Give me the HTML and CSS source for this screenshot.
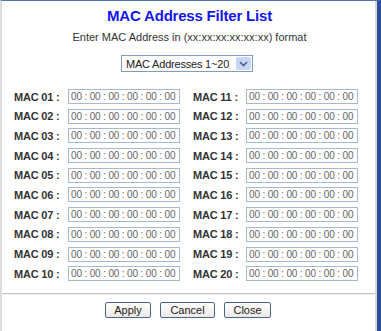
FILE: index.html
```html
<!DOCTYPE html>
<html lang="en">
<head>
  <meta charset="UTF-8" />
  <title>MAC Address Filter List</title>
  <link rel="stylesheet" href="styles.css">
</head>
<body>
  <div class="frame">
    <h1 class="title">MAC Address Filter List</h1>
    <p class="hint">Enter MAC Address in (xx:xx:xx:xx:xx:xx) format</p>

    <div class="picker">
      <div class="select">
        <span class="select-text">MAC Addresses 1~20</span>
        <span class="select-btn">
          <svg width="9" height="6" viewBox="0 0 9 6"><path d="M1 1 L4.5 4.5 L8 1" fill="none" stroke="#4d6185" stroke-width="1.6"/></svg>
        </span>
      </div>
    </div>

    <div class="list">
      <div class="entry"><span class="lbl">MAC 01 :</span><input class="mac" type="text" value="00 : 00 : 00 : 00 : 00 : 00"></div>
      <div class="entry"><span class="lbl">MAC 02 :</span><input class="mac" type="text" value="00 : 00 : 00 : 00 : 00 : 00"></div>
      <div class="entry"><span class="lbl">MAC 03 :</span><input class="mac" type="text" value="00 : 00 : 00 : 00 : 00 : 00"></div>
      <div class="entry"><span class="lbl">MAC 04 :</span><input class="mac" type="text" value="00 : 00 : 00 : 00 : 00 : 00"></div>
      <div class="entry"><span class="lbl">MAC 05 :</span><input class="mac" type="text" value="00 : 00 : 00 : 00 : 00 : 00"></div>
      <div class="entry"><span class="lbl">MAC 06 :</span><input class="mac" type="text" value="00 : 00 : 00 : 00 : 00 : 00"></div>
      <div class="entry"><span class="lbl">MAC 07 :</span><input class="mac" type="text" value="00 : 00 : 00 : 00 : 00 : 00"></div>
      <div class="entry"><span class="lbl">MAC 08 :</span><input class="mac" type="text" value="00 : 00 : 00 : 00 : 00 : 00"></div>
      <div class="entry"><span class="lbl">MAC 09 :</span><input class="mac" type="text" value="00 : 00 : 00 : 00 : 00 : 00"></div>
      <div class="entry"><span class="lbl">MAC 10 :</span><input class="mac" type="text" value="00 : 00 : 00 : 00 : 00 : 00"></div>
      <div class="entry"><span class="lbl">MAC 11 :</span><input class="mac" type="text" value="00 : 00 : 00 : 00 : 00 : 00"></div>
      <div class="entry"><span class="lbl">MAC 12 :</span><input class="mac" type="text" value="00 : 00 : 00 : 00 : 00 : 00"></div>
      <div class="entry"><span class="lbl">MAC 13 :</span><input class="mac" type="text" value="00 : 00 : 00 : 00 : 00 : 00"></div>
      <div class="entry"><span class="lbl">MAC 14 :</span><input class="mac" type="text" value="00 : 00 : 00 : 00 : 00 : 00"></div>
      <div class="entry"><span class="lbl">MAC 15 :</span><input class="mac" type="text" value="00 : 00 : 00 : 00 : 00 : 00"></div>
      <div class="entry"><span class="lbl">MAC 16 :</span><input class="mac" type="text" value="00 : 00 : 00 : 00 : 00 : 00"></div>
      <div class="entry"><span class="lbl">MAC 17 :</span><input class="mac" type="text" value="00 : 00 : 00 : 00 : 00 : 00"></div>
      <div class="entry"><span class="lbl">MAC 18 :</span><input class="mac" type="text" value="00 : 00 : 00 : 00 : 00 : 00"></div>
      <div class="entry"><span class="lbl">MAC 19 :</span><input class="mac" type="text" value="00 : 00 : 00 : 00 : 00 : 00"></div>
      <div class="entry"><span class="lbl">MAC 20 :</span><input class="mac" type="text" value="00 : 00 : 00 : 00 : 00 : 00"></div>
    </div>

    <div class="sep"></div>

    <div class="actions">
      <button class="btn btn-apply">Apply</button>
      <button class="btn btn-cancel">Cancel</button>
      <button class="btn btn-close">Close</button>
    </div>
  </div>
</body>
</html>
```

FILE: styles.css
```css
html, body { margin: 0; padding: 0; background: #fff; }
body { font-family: "Liberation Sans", Arial, sans-serif; color: #333; }

.frame { width: 381px; height: 331px; box-sizing: border-box; border-top: 1px solid #5276bd; border-left: 2px solid #dcdcdc; border-right: 4px solid #2c4f9f; box-shadow: inset -2px 0 0 #d8d8d8; }

.title { margin: 6px 0 0; font-size: 15px; line-height: 18px; font-weight: bold; color: #1515f0; text-align: center; letter-spacing: -0.2px; }
.hint { margin: 5px 0 0; font-size: 11px; line-height: 14px; color: #333; text-align: center; }

.picker { display: flex; justify-content: center; margin-top: 11px; padding-right: 5px; }
.select { display: flex; align-items: center; width: 132px; height: 17px; box-sizing: border-box; border: 1px solid #7f9db9; background: #fff; }
.select-text { flex: 1; font-size: 11px; padding-left: 4px; color: #222; letter-spacing: -0.2px; }
.select-btn { display: flex; align-items: center; justify-content: center; width: 15px; height: 13px; margin-right: 1px; background: #c7d6f6; border-radius: 2px; }

.list { display: grid; grid-auto-flow: column; grid-template-rows: repeat(10, 15px); grid-template-columns: 166px 166px; column-gap: 13px; row-gap: 4.7px; margin-top: 17px; padding-left: 12px; }
.entry { display: flex; align-items: center; }
.lbl { width: 54px; font-size: 11px; font-weight: bold; color: #333; white-space: nowrap; letter-spacing: -0.2px; }
.entry:nth-child(n+11) .lbl { width: 53px; }
.mac { width: 112px; height: 15px; box-sizing: border-box; margin: 0; padding: 0 0 0 2px; border: 1px solid #a5b9d3; font-family: "Liberation Sans", Arial, sans-serif; font-size: 10px; letter-spacing: -0.15px; color: #666; background: #fff; outline: none; }

.sep { height: 0; margin-top: 12px; border-top: 1px solid #c9c6be; border-bottom: 1px solid #eeeeee; }

.actions { display: flex; justify-content: center; gap: 9px; margin-top: 7px; padding-right: 3px; }
.btn { height: 16px; padding: 0; font-family: "Liberation Sans", Arial, sans-serif; font-size: 11px; color: #222; border: 1px solid #4a6690; border-radius: 2px; background: linear-gradient(#ffffff, #ece9e2); cursor: pointer; }
.btn-apply { width: 46px; }
.btn-cancel { width: 55px; }
.btn-close { width: 47px; }
```
